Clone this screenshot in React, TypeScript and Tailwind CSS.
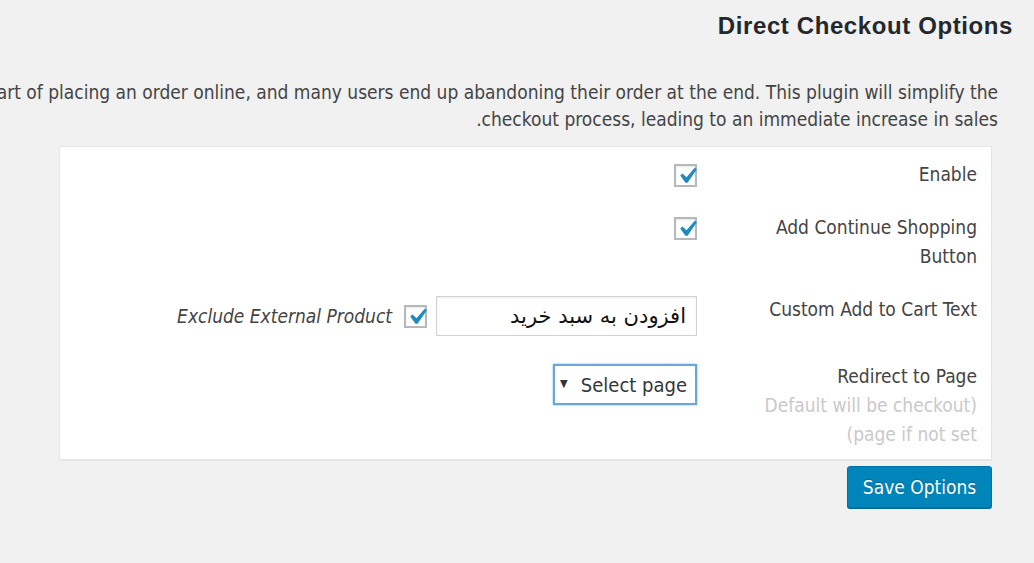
import { useState } from 'react';

const Checkbox = ({ checked, onToggle }: { checked: boolean; onToggle: () => void }) => (
    <button
        type="button"
        onClick={onToggle}
        className="relative block w-[23px] h-[23px] bg-white border-2 border-[#b4b9be] shadow-[inset_0_1px_2px_rgba(0,0,0,0.1)] shrink-0"
    >
        {checked && (
            <svg viewBox="0 0 20 20" className="absolute left-[-5px] top-[-6px] w-[32px] h-[32px]" fill="#1e8cbe">
                <path d="M14.83 4.89l1.34.94-5.81 8.38H9.02L5.78 9.67l1.34-1.25 2.57 2.4z" />
            </svg>
        )}
    </button>
);

export default function App() {
    const [enable, setEnable] = useState(true);
    const [continueBtn, setContinueBtn] = useState(true);
    const [exclude, setExclude] = useState(true);
    const [cartText, setCartText] = useState('افزودن به سبد خرید');

    return (
        <div
            dir="rtl"
            className="w-full h-[563px] bg-[#f1f1f1] overflow-hidden text-[#444] font-['DejaVu_Sans_Condensed','DejaVu_Sans',sans-serif] text-[19px]"
        >
            <h1 className="pr-[21px] pt-[12px] text-[24px] leading-[28px] font-bold tracking-[0.6px] text-[#23282d] font-['Liberation_Sans',Arial,sans-serif]">
                Direct Checkout Options
            </h1>

            <div className="mt-[39px] pr-[36px] leading-[27px] text-[#444]">
                <div className="whitespace-nowrap">
                    The purchasing process is a long and tiring one from the start of placing an order online, and many users end up abandoning their order at the end. This plugin will simplify the
                </div>
                <div className="whitespace-nowrap">checkout process, leading to an immediate increase in sales.</div>
            </div>

            <div className="mt-[13px] mr-[42px] ml-[59px] bg-white border border-[#e5e5e5] shadow-[0_1px_1px_rgba(0,0,0,0.04)] pr-[14px] pt-[13px] pb-[10px]">
                <div className="flex items-start gap-[60px] pb-[24px]">
                    <div className="w-[220px] leading-[29px]">Enable</div>
                    <div className="flex pt-[4px]">
                        <Checkbox checked={enable} onToggle={() => setEnable(!enable)} />
                    </div>
                </div>

                <div className="flex items-start gap-[60px] pb-[24px]">
                    <div className="w-[220px] leading-[29px]">Add Continue Shopping Button</div>
                    <div className="flex pt-[4px]">
                        <Checkbox checked={continueBtn} onToggle={() => setContinueBtn(!continueBtn)} />
                    </div>
                </div>

                <div className="flex items-start gap-[60px] pb-[26px]">
                    <div className="w-[220px] leading-[29px]">Custom Add to Cart Text</div>
                    <div className="pt-[1px] flex items-center gap-[9px]">
                        <input
                            value={cartText}
                            onChange={(e) => setCartText(e.target.value)}
                            className="w-[261px] h-[40px] border border-[#d1d1d1] shadow-[inset_0_1px_2px_rgba(0,0,0,0.07)] px-[10px] text-[21px] text-[#111] outline-none font-['DejaVu_Sans',sans-serif]"
                        />
                        <div className="flex items-center gap-[12px]">
                            <Checkbox checked={exclude} onToggle={() => setExclude(!exclude)} />
                            <span className="italic">Exclude External Product</span>
                        </div>
                    </div>
                </div>

                <div className="flex items-start gap-[60px]">
                    <div className="w-[220px] leading-[29px]">
                        <div>Redirect to Page</div>
                        <div className="text-[#c9c9c9]">(Default will be checkout page if not set)</div>
                    </div>
                    <div className="flex pt-[2px]">
                        <div className="w-[144px] h-[41px] border-2 border-[#6aa6dd] shadow-[0_0_2px_rgba(30,140,190,0.6)] bg-white flex items-center justify-between pr-[8px] pl-[5px] text-[20px] text-[#32373c]">
                            <span>Select page</span>
                            <span className="text-[11px] text-[#333]">▼</span>
                        </div>
                    </div>
                </div>
            </div>

            <div className="mt-[6px] mr-[42px] flex">
                <button
                    type="button"
                    className="w-[145px] h-[42px] rounded-[3px] bg-[#0085ba] border border-[#0073aa] shadow-[0_1px_0_#006799] text-white text-[19px] [text-shadow:0_-1px_1px_#006799]"
                >
                    Save Options
                </button>
            </div>
        </div>
    );
}
